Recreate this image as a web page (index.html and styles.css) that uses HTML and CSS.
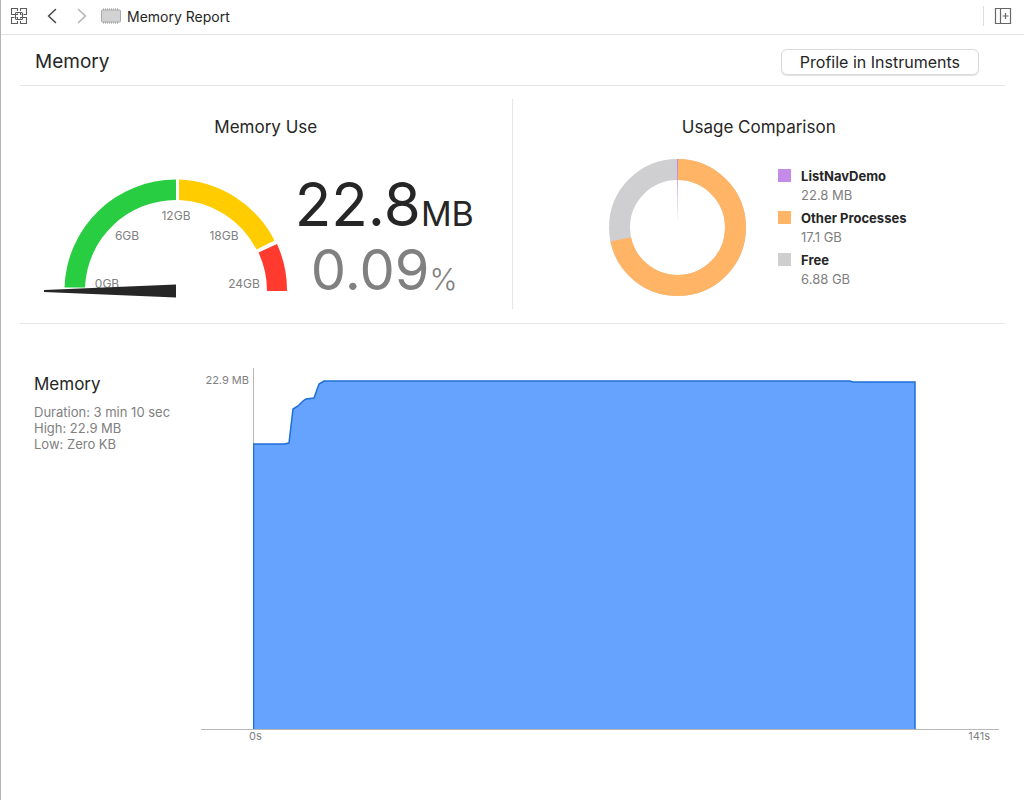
FILE: index.html
```html
<!DOCTYPE html>
<html lang="en">
<head>
    <meta charset="UTF-8">
    <meta name="viewport" content="width=device-width, initial-scale=1.0">
    <title>Memory Report</title>
    <link rel="stylesheet" href="styles.css">
</head>
<body>
    <nav class="toolbar">
        <button class="icon-btn" aria-label="Related items">
            <svg width="18" height="18" viewBox="0 0 18 18" fill="none" stroke="#5c5c5c" stroke-width="1.1">
                <path d="M7.500 4V1.500H1.500V7.500H7.500V6.500M10.500 4V1.500H16.500V7.500H13.500M7.500 14V16.500H1.500V10.500H4.500M10.500 14V16.500H16.500V10.500H10.500V11.500"/>
                <path d="M5.500 5.500H12M10.500 5.500V7.500H11.500M12.500 5.500V12M6 12.500H12.500M5.500 6V12.500M6.500 10.500H7.500V12.500"/>
            </svg>
        </button>
        <button class="icon-btn back" aria-label="Back">
            <svg width="10" height="16" viewBox="0 0 10 16" fill="none" stroke="#4a4a4a" stroke-width="1.6" stroke-linecap="round" stroke-linejoin="round"><path d="M8.500 1.500L1.500 8L8.500 14.500"/></svg>
        </button>
        <button class="icon-btn forward" aria-label="Forward">
            <svg width="10" height="16" viewBox="0 0 10 16" fill="none" stroke="#b4b4b4" stroke-width="1.6" stroke-linecap="round" stroke-linejoin="round"><path d="M1.500 1.500L8.500 8L1.500 14.500"/></svg>
        </button>
        <svg class="chip" width="20" height="16" viewBox="0 0 20 16">
            <path d="M2 1.500H18M2 14.500H18" stroke="#999" stroke-width="2" stroke-dasharray="1 1"/>
            <rect x="0.500" y="2" width="19" height="12" rx="1" fill="#d2d2d2" stroke="#aaa"/>
        </svg>
        <span class="crumb">Memory Report</span>
        <span class="toolbar-sep"></span>
        <button class="icon-btn" aria-label="Add editor">
            <svg width="18" height="18" viewBox="0 0 18 18" fill="none" stroke="#666" stroke-width="1.2"><path d="M1.500 1.500H16.500V16.500H1.500ZM6.500 1.500V16.500M8.500 9H14.500M11.500 6V12"/></svg>
        </button>
    </nav>

    <main class="report">
        <header class="report-header">
            <h1>Memory</h1>
            <button class="profile-btn">Profile in Instruments</button>
        </header>

        <div class="panels">
            <section class="panel">
                <h2>Memory Use</h2>
                <div class="usage">
                    <svg class="gauge" width="244" height="122" viewBox="0 0 244 122">
                        <path fill="#28cd41" d="M20.500 108.500A111.500 111.500 0 0 1 132 0.500V21A91 91 0 0 0 41 108.500Z"/>
                        <path fill="#ffcc00" d="M135 0.500A111.500 111.500 0 0 1 230.500 61.500L212.500 70.500A91 91 0 0 0 135 21Z"/>
                        <path fill="#ff3b30" d="M233 65A111.500 111.500 0 0 1 243 112H223A91 91 0 0 0 214.500 73.500Z"/>
                        <g class="gauge-labels">
                            <text x="63" y="109">0GB</text>
                            <text x="83" y="61">6GB</text>
                            <text x="132" y="41">12GB</text>
                            <text x="180" y="61">18GB</text>
                            <text x="200" y="109">24GB</text>
                        </g>
                        <path fill="#262626" d="M0 111L132 105.500V118.500L0 113Z"/>
                    </svg>
                    <div class="readout">
                        <div class="amount">22.8<span class="amount-unit">MB</span></div>
                        <div class="percent">0.09<span class="percent-unit">%</span></div>
                    </div>
                </div>
            </section>

            <section class="panel">
                <h2>Usage Comparison</h2>
                <div class="comparison">
                    <svg class="donut" width="137" height="137" viewBox="0 0 137 137" fill="none" stroke-width="21">
                        <circle cx="68.500" cy="68.500" r="58" stroke="#cfcfd1"/>
                        <circle cx="68.500" cy="68.500" r="58" stroke="#ffb565" pathLength="100" stroke-dasharray="71.700 28.300" transform="rotate(-90 68.500 68.500)"/>
                        <path d="M68 0H69L68.500 64Z" fill="#bf85e6"/>
                    </svg>
                    <dl class="legend">
                        <div class="legend-item">
                            <span class="swatch app"></span>
                            <dt>ListNavDemo</dt>
                            <dd>22.8 MB</dd>
                        </div>
                        <div class="legend-item">
                            <span class="swatch other"></span>
                            <dt>Other Processes</dt>
                            <dd>17.1 GB</dd>
                        </div>
                        <div class="legend-item">
                            <span class="swatch free"></span>
                            <dt>Free</dt>
                            <dd>6.88 GB</dd>
                        </div>
                    </dl>
                </div>
            </section>
        </div>

        <section class="history">
            <div class="summary">
                <h2>Memory</h2>
                <p>Duration: 3 min 10 sec</p>
                <p>High: 22.9 MB</p>
                <p>Low: Zero KB</p>
            </div>
            <div class="chart">
                <div class="y-axis">22.9 MB</div>
                <svg class="plot" viewBox="0 0 746 361" preserveAspectRatio="none">
                    <path class="axis-line" d="M0.500 0V361"/>
                    <path class="plot-area" d="M0 361V76H31L36 75L40 41L45 38L50 33L53 31L61 30L66 16L71 13H597L600 14H662V361Z"/>
                    <path class="plot-line" d="M0.500 361V76H31L36 75L40 41L45 38L50 33L53 31L61 30L66 16L71 13H597L600 14H662V361"/>
                </svg>
                <div class="x-axis"><span>0s</span><span>141s</span></div>
            </div>
        </section>
    </main>
</body>
</html>
```

FILE: styles.css
```css
* {
    box-sizing: border-box;
}
body {
    margin: 0;
    min-height: 100vh;
    border-left: 1px solid #b5b5b5;
    background-color: #fff;
    color: #262626;
    font-family: Inter, "Liberation Sans", sans-serif;
}
h1, h2, p, dl, dd {
    margin: 0;
    font-weight: 400;
}
.toolbar {
    display: flex;
    align-items: center;
    height: 35px;
    padding: 0 12px 2px 9px;
    border-bottom: 1px solid #e2e2e2;
}
.icon-btn {
    display: flex;
    padding: 0;
    border: none;
    background: none;
}
.back {
    margin-left: 19px;
}
.forward {
    margin: 0 14px 0 20px;
}
.crumb {
    margin-left: 6px;
    font-size: 14px;
}
.toolbar-sep {
    width: 1px;
    height: 20px;
    margin: 0 10px 0 auto;
    background-color: #dedede;
}
.report {
    padding: 0 19px;
}
.report-header {
    display: flex;
    align-items: center;
    justify-content: space-between;
    height: 51px;
    padding: 0 26px 0 15px;
    border-bottom: 1px solid #e6e6e6;
}
h1 {
    padding-top: 4px;
    font-size: 19px;
    line-height: 24px;
}
.profile-btn {
    height: 26px;
    margin-top: 4px;
    padding: 0 18px;
    border: 1px solid #dadada;
    border-radius: 6px;
    background-color: #fff;
    box-shadow: 0 1px 1px rgba(0, 0, 0, 0.12);
    color: #262626;
    font-family: inherit;
    font-size: 16px;
}
.panels {
    display: grid;
    grid-template-columns: 1fr 1fr;
    padding: 13px 0 14px;
    border-bottom: 1px solid #e6e6e6;
}
.panel {
    height: 210px;
    padding-top: 16px;
}
.panel:first-child {
    border-right: 1px solid #e6e6e6;
}
.panel h2 {
    font-size: 17px;
    line-height: 24px;
    text-align: center;
}
.usage {
    display: flex;
    justify-content: center;
    padding: 33px 7px 0 0;
}
.gauge {
    margin-top: 7px;
}
.gauge-labels {
    fill: #808080;
    font-size: 12px;
    text-anchor: middle;
}
.readout {
    width: 192px;
    text-align: center;
    white-space: nowrap;
}
.amount {
    font-size: 60px;
    line-height: 64px;
}
.amount-unit {
    font-size: 34px;
}
.percent {
    color: #808080;
    font-size: 56px;
    line-height: 48px;
}
.percent-unit {
    font-size: 30px;
    font-weight: 300;
}
.comparison {
    display: flex;
    justify-content: center;
    gap: 32px;
    padding: 20px 2px 0 0;
}
.legend {
    display: flex;
    flex-direction: column;
    gap: 4px;
    padding-top: 8px;
    font-size: 13px;
    line-height: 19px;
}
.legend-item {
    display: grid;
    grid-template-columns: 13px auto;
    column-gap: 10px;
}
.legend dt {
    font-weight: 700;
}
.legend dd {
    grid-column: 2;
    color: #808080;
}
.swatch {
    height: 13px;
    margin-top: 2px;
}
.app {
    background-color: #c48ae8;
}
.other {
    background-color: #ffb565;
}
.free {
    background-color: #cfcfcf;
}
.history {
    display: flex;
    padding: 44px 6px 0 14px;
}
.summary {
    width: 167px;
    padding-top: 4px;
    color: #808080;
    font-size: 13px;
    line-height: 16px;
}
.summary h2 {
    margin-bottom: 8px;
    color: #262626;
    font-size: 17px;
    line-height: 24px;
}
.chart {
    flex: 1;
    display: grid;
    grid-template-columns: 52px 1fr;
}
.y-axis {
    padding: 4px 4px 0 0;
    border-bottom: 1px solid #b8b8b8;
    color: #808080;
    font-size: 11px;
    line-height: 16px;
    text-align: right;
}
.plot {
    width: 100%;
    height: 362px;
    border-bottom: 1px solid #b8b8b8;
}
.axis-line {
    fill: none;
    stroke: #b8b8b8;
    vector-effect: non-scaling-stroke;
}
.plot-area {
    fill: #66a3ff;
}
.plot-line {
    fill: none;
    stroke: #1f6fd6;
    stroke-width: 1.5px;
    vector-effect: non-scaling-stroke;
}
.x-axis {
    grid-column: 2;
    display: flex;
    justify-content: space-between;
    padding-right: 9px;
    color: #808080;
    font-size: 11px;
    line-height: 12px;
}
.x-axis span:first-child {
    margin-left: -4px;
}
```
